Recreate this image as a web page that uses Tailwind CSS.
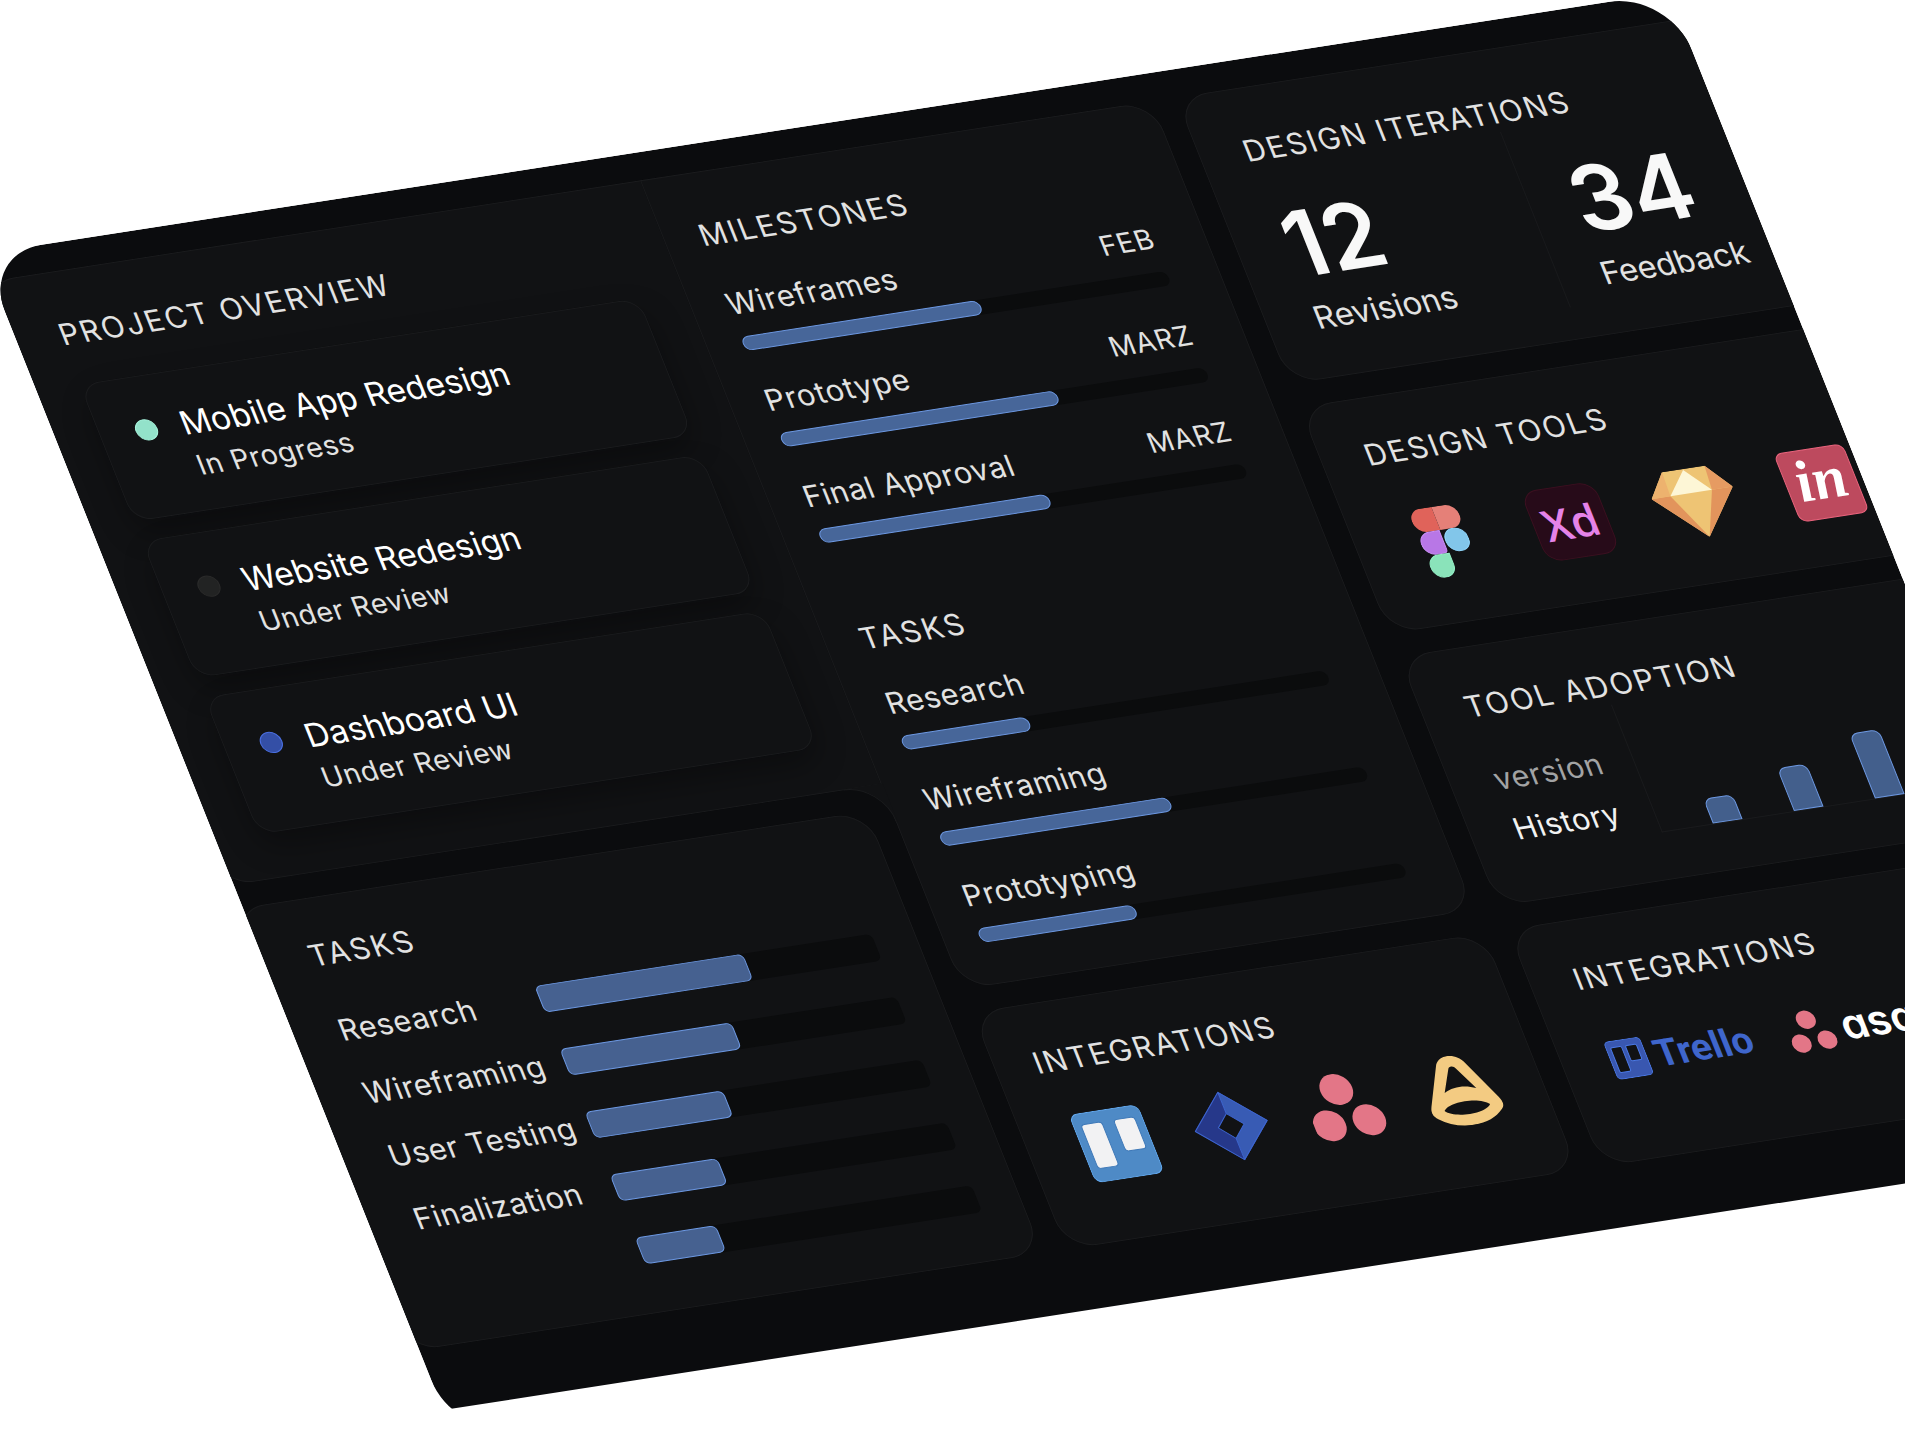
<!DOCTYPE html>
<html lang="en">
<head>
    <meta charset="UTF-8">
    <meta name="viewport" content="width=device-width, initial-scale=1.0">
    <title>Design project dashboard</title>
    <script src="https://cdn.jsdelivr.net/npm/@tailwindcss/browser@4"></script>
</head>
<body class="bg-white font-['Inter',sans-serif] text-[#e2e2e2]">
    <main class="min-h-screen overflow-hidden pt-[254px]">
        <!-- Tilted board, cut a little above its lower rounding -->
        <div class="-ml-[18px] w-[calc(100%-198px)] origin-top-left -rotate-[8.81deg] skew-x-[12.94deg] overflow-hidden">
            <div class="-mb-[29px] overflow-hidden rounded-[60px] bg-[#0b0c0e] pt-7 pb-[92px]">
                <div class="-mr-[37px] -ml-[11px] grid grid-cols-[641fr_518fr_546fr] gap-x-6">

                    <!-- Left column -->
                    <div class="flex min-w-0 flex-col gap-6">
                        <section class="relative -mr-11 rounded-l-[32px] bg-[#111214] pt-11 pr-[66px] pb-[46px] pl-[54px] ring-1 ring-[#1a1b1d] ring-inset">
                            <h2 class="text-[30px]/10 tracking-[2px]">PROJECT OVERVIEW</h2>
                            <ul class="mt-8 flex flex-col gap-5">
                                <li class="flex h-36 gap-6 rounded-[20px] bg-[#111214] pt-8 pl-9 shadow-[0_14px_30px_rgba(0,0,0,0.3)] ring-1 ring-[#1a1b1d] ring-inset">
                                    <span class="mt-3 size-[22px] rounded-full border border-[#a6f3dc] bg-[#93e2ca]"></span>
                                    <div>
                                        <h3 class="text-[33px]/[44px] text-white">Mobile App Redesign</h3>
                                        <p class="text-[28px]/[44px] tracking-wide">In Progress</p>
                                    </div>
                                </li>
                                <li class="flex h-36 gap-6 rounded-[20px] bg-[#111214] pt-8 pl-9 shadow-[0_14px_30px_rgba(0,0,0,0.3)] ring-1 ring-[#1a1b1d] ring-inset">
                                    <span class="mt-3 size-[22px] rounded-full border border-[#2a2a2a] bg-[#222323]"></span>
                                    <div>
                                        <h3 class="text-[33px]/[44px] text-white">Website Redesign</h3>
                                        <p class="text-[28px]/[44px] tracking-wide">Under Review</p>
                                    </div>
                                </li>
                                <li class="flex h-36 gap-6 rounded-[20px] bg-[#111214] pt-8 pl-9 shadow-[0_14px_30px_rgba(0,0,0,0.3)] ring-1 ring-[#1a1b1d] ring-inset">
                                    <span class="mt-3 size-[22px] rounded-full border border-[#4a6fe0] bg-[#344fa6]"></span>
                                    <div>
                                        <h3 class="text-[33px]/[44px] text-white">Dashboard UI</h3>
                                        <p class="text-[28px]/[44px] tracking-wide">Under Review</p>
                                    </div>
                                </li>
                            </ul>
                            <!-- inner corner where this card meets the next column -->
                            <svg class="absolute top-full right-[18px] z-20 -mt-px size-10" viewBox="0 0 40 40" fill="none">
                                <path d="M0 0H40V40H38.5A38 38 0 0 0 0 .5Z" fill="#111214"/>
                                <path d="M0 .5A38.5 38.5 0 0 1 38.5 40" stroke="#1a1b1d"/>
                            </svg>
                        </section>

                        <section class="flex-1 rounded-[32px] bg-[#111214] pt-[38px] pr-[42px] pb-11 pl-14 ring-1 ring-[#1a1b1d] ring-inset">
                            <h2 class="text-[30px]/10 tracking-[2px]">TASKS</h2>
                            <ul class="mt-[38px] flex flex-col gap-[26px] text-[30px]/10 tracking-wide">
                                <li class="flex h-10 items-center">
                                    <span class="w-[203px]">Research</span>
                                    <div class="h-7 flex-1 rounded-md bg-[#0b0c0d]"><div class="h-7 w-[62%] rounded-md border border-[#6c97e0] bg-[#466190]"></div></div>
                                </li>
                                <li class="flex h-10 items-center">
                                    <span class="w-[203px]">Wireframing</span>
                                    <div class="h-7 flex-1 rounded-md bg-[#0b0c0d]"><div class="h-7 w-[51%] rounded-md border border-[#6c97e0] bg-[#466190]"></div></div>
                                </li>
                                <li class="flex h-10 items-center">
                                    <span class="w-[203px]">User Testing</span>
                                    <div class="h-7 flex-1 rounded-md bg-[#0b0c0d]"><div class="h-7 w-[41%] rounded-md border border-[#6c97e0] bg-[#466190]"></div></div>
                                </li>
                                <li class="flex h-10 items-center">
                                    <span class="w-[203px]">Finalization</span>
                                    <div class="h-7 flex-1 rounded-md bg-[#0b0c0d]"><div class="h-7 w-[32%] rounded-md border border-[#6c97e0] bg-[#466190]"></div></div>
                                </li>
                                <li class="flex h-10 items-center">
                                    <span class="w-[203px]"></span>
                                    <div class="h-7 flex-1 rounded-md bg-[#0b0c0d]"><div class="h-7 w-[24%] rounded-md border border-[#6c97e0] bg-[#466190]"></div></div>
                                </li>
                            </ul>
                        </section>
                    </div>

                    <!-- Middle column -->
                    <div class="relative z-10 flex min-w-0 flex-col gap-6">
                        <section class="rounded-[32px] rounded-tl-none bg-[#111214] pt-11 pr-[51px] pb-[43px] pl-9 ring-1 ring-[#1a1b1d] ring-inset">
                            <h2 class="text-[30px]/10 tracking-[2px]">MILESTONES</h2>
                            <ul class="mt-8 flex flex-col gap-8 text-[30px]/10 tracking-wide">
                                <li>
                                    <div class="flex justify-between"><span>Wireframes</span><span class="text-[28px]/10">FEB</span></div>
                                    <div class="mt-3.5 h-[15px] rounded-full bg-[#0b0c0d]"><div class="h-[15px] w-[56%] rounded-full border border-[#6c97e0] bg-[#476699]"></div></div>
                                </li>
                                <li>
                                    <div class="flex justify-between"><span>Prototype</span><span class="text-[28px]/10">MARZ</span></div>
                                    <div class="mt-3.5 h-[15px] rounded-full bg-[#0b0c0d]"><div class="h-[15px] w-[65%] rounded-full border border-[#6c97e0] bg-[#476699]"></div></div>
                                </li>
                                <li>
                                    <div class="flex justify-between"><span>Final Approval</span><span class="text-[28px]/10">MARZ</span></div>
                                    <div class="mt-3.5 h-[15px] rounded-full bg-[#0b0c0d]"><div class="h-[15px] w-[54%] rounded-full border border-[#6c97e0] bg-[#476699]"></div></div>
                                </li>
                            </ul>
                            <h2 class="mt-20 text-[30px]/10 tracking-[2px]">TASKS</h2>
                            <ul class="mt-7 flex flex-col gap-8 text-[30px]/10 tracking-wide">
                                <li>
                                    <span class="block">Research</span>
                                    <div class="mt-3.5 h-[15px] rounded-full bg-[#0b0c0d]"><div class="h-[15px] w-[30%] rounded-full border border-[#6c97e0] bg-[#476699]"></div></div>
                                </li>
                                <li>
                                    <span class="block">Wireframing</span>
                                    <div class="mt-3.5 h-[15px] rounded-full bg-[#0b0c0d]"><div class="h-[15px] w-[54%] rounded-full border border-[#6c97e0] bg-[#476699]"></div></div>
                                </li>
                                <li>
                                    <span class="block">Prototyping</span>
                                    <div class="mt-3.5 h-[15px] rounded-full bg-[#0b0c0d]"><div class="h-[15px] w-[37%] rounded-full border border-[#6c97e0] bg-[#476699]"></div></div>
                                </li>
                            </ul>
                        </section>

                        <section class="flex-1 rounded-[32px] bg-[#111214] pt-10 pl-10 ring-1 ring-[#1a1b1d] ring-inset">
                            <h2 class="text-[30px]/10 tracking-[2px]">INTEGRATIONS</h2>
                            <div class="mt-9 -ml-2.5 grid grid-cols-[repeat(4,116px)] justify-items-center">
                                <svg class="h-[72px] w-[70px]" viewBox="0 0 70 72">
                                    <rect x=".5" y=".5" width="69" height="71" rx="8" fill="#4e8ac6" stroke="#62a8ee"/>
                                    <rect x="8" y="12" width="21" height="46" rx="3.5" fill="#f2f2f3" stroke="#3f79b8"/>
                                    <rect x="41" y="12" width="21" height="33" rx="3.5" fill="#f2f2f3" stroke="#3f79b8"/>
                                </svg>
                                <svg class="h-[72px] w-[74px]" viewBox="0 0 74 72">
                                    <path d="M37 0V23L24 36L37 49V72L0 36Z" fill="#26388a"/>
                                    <path d="M37 0L74 36L37 72V49L50 36L37 23Z" fill="#385bb4"/>
                                    <path d="M37 .7L73.3 36L37 71.3L.7 36ZM37 23L50 36L37 49L24 36ZM37 0V23M37 49V72" fill="none" stroke="#3d65cf"/>
                                </svg>
                                <svg class="h-[72px] w-[74px]" viewBox="0 0 74 72" fill="#e37687">
                                    <circle cx="35" cy="16" r="16"/>
                                    <circle cx="15" cy="51" r="16"/>
                                    <circle cx="55" cy="51" r="16"/>
                                </svg>
                                <svg class="h-[72px] w-[72px]" viewBox="0 0 72 72">
                                    <path fill="#f3cb82" fill-rule="evenodd" d="M36 0C43 0 48 4 50 8L70 48C73 54 72 58 68 61C60 68 49 72 36 72C23 72 12 68 4 61C0 58 -1 54 2 48L22 8C24 4 29 0 36 0ZM36 11C34 11 33 12 32 14L20 36C30 31 42 31 52 36L40 14C39 12 38 11 36 11ZM13 54C20 45 52 45 59 54C52 63 20 63 13 54Z"/>
                                </svg>
                            </div>
                        </section>
                    </div>

                    <!-- Right column -->
                    <div class="flex min-w-0 flex-col gap-6">
                        <section class="rounded-[32px] bg-[#111214] pt-11 pb-[33px] pl-11 ring-1 ring-[#1a1b1d] ring-inset">
                            <h2 class="text-[30px]/10 tracking-[2px]">DESIGN ITERATIONS</h2>
                            <div class="grid grid-cols-2">
                                <div class="pt-9 pb-2 pl-1">
                                    <p class="text-[92px]/[88px] font-semibold text-[#f8f8f8]">12</p>
                                    <p class="mt-3 text-[32px]/10">Revisions</p>
                                </div>
                                <div class="border-l border-[#191a1c] pt-9 pl-[42px]">
                                    <p class="text-[92px]/[88px] font-semibold text-[#f8f8f8]">34</p>
                                    <p class="mt-3 text-[32px]/10">Feedback</p>
                                </div>
                            </div>
                        </section>

                        <section class="rounded-[32px] bg-[#111214] pt-[38px] pb-[46px] pl-11 ring-1 ring-[#1a1b1d] ring-inset">
                            <h2 class="text-[30px]/10 tracking-[2px]">DESIGN TOOLS</h2>
                            <div class="mt-10 -ml-5 grid grid-cols-[repeat(4,127px)] items-center justify-items-center">
                                <svg class="h-[72px] w-12" viewBox="0 0 48 72">
                                    <path d="M24 0H12A12 12 0 0 0 12 24H24Z" fill="#e0635a"/>
                                    <path d="M24 0H36A12 12 0 0 1 36 24H24Z" fill="#e58078"/>
                                    <path d="M22.500 24.500H12A11.500 11.500 0 0 0 12 47.500H19Q22.500 47.500 22.500 44Z" fill="#b877e6" stroke="#c98df5"/>
                                    <rect x="25" y="24.500" width="22.500" height="23" rx="10.500" fill="#82c6ea" stroke="#8fd4fa"/>
                                    <path d="M23.500 48.500H12A11.500 11.500 0 1 0 23.500 60Z" fill="#8ae3ba" stroke="#93f0c6"/>
                                </svg>
                                <div class="flex h-[74px] w-[74px] items-center justify-center rounded-2xl border border-[#3b1020] bg-[#270b19] font-['Open_Sans',sans-serif] text-[44px] font-semibold text-[#e583e8]">Xd</div>
                                <svg class="h-[71px] w-[82px]" viewBox="0 0 82 71">
                                    <path d="M20 0H63L82 25L41 71L0 25Z" fill="#eec474"/>
                                    <path d="M0 25H19L41 71Z" fill="#e2945c"/>
                                    <path d="M82 25H61L41 71Z" fill="#e2945c"/>
                                    <path d="M20 0L0 25H19Z" fill="#edb26e"/>
                                    <path d="M63 0L82 25H61Z" fill="#e69b62"/>
                                    <path d="M41 1L19 25H61Z" fill="#fdf6d6"/>
                                </svg>
                                <div class="flex h-[72px] w-[70px] items-center justify-center rounded-lg border border-[#e8637c] bg-[#bd4a5e] pb-2 font-['Liberation_Serif',serif] text-[60px]/[60px] font-bold text-white italic">in</div>
                            </div>
                        </section>

                        <section class="rounded-[32px] bg-[#111214] pt-10 pb-12 pl-11 ring-1 ring-[#1a1b1d] ring-inset">
                            <h2 class="text-[30px]/10 tracking-[2px]">TOOL ADOPTION</h2>
                            <div class="flex">
                                <div class="flex w-[140px] flex-col gap-3 pt-9 text-[30px]/10 tracking-wide">
                                    <span class="text-[#a2a3a4]">version</span>
                                    <span class="text-[#f2f2f2]">History</span>
                                </div>
                                <div class="flex h-[134px] flex-1 items-end gap-[52px] border-b border-l border-[#1a1b1d] pl-[51px]">
                                    <div class="h-[26px] w-[30px] rounded-t-lg border border-[#6c97e0] bg-[#435f8c]"></div>
                                    <div class="h-[45px] w-[30px] rounded-t-lg border border-[#6c97e0] bg-[#435f8c]"></div>
                                    <div class="h-[68px] w-[30px] rounded-t-lg border border-[#6c97e0] bg-[#435f8c]"></div>
                                </div>
                            </div>
                        </section>

                        <section class="flex-1 rounded-[32px] bg-[#111214] pt-10 pl-11 ring-1 ring-[#1a1b1d] ring-inset">
                            <h2 class="text-[30px]/10 tracking-[2px]">INTEGRATIONS</h2>
                            <div class="mt-11 flex gap-9 pl-1">
                                <div class="flex items-center gap-2">
                                    <svg class="h-10 w-[37px]" viewBox="0 0 37 40">
                                        <rect x=".5" y=".5" width="36" height="39" rx="4.500" fill="#3957b0" stroke="#4a78e4"/>
                                        <rect x="5" y="7" width="11" height="26" rx="1.500" fill="#111214" stroke="#4a78e4"/>
                                        <rect x="20" y="7" width="11" height="16" rx="1.500" fill="#111214" stroke="#4a78e4"/>
                                    </svg>
                                    <span class="font-['Roboto',sans-serif] text-[38px]/[44px] font-bold text-[#3f66cc]">Trello</span>
                                </div>
                                <div class="flex items-center gap-2">
                                    <svg class="h-[43px] w-[46px]" viewBox="0 0 46 43" fill="#e37687">
                                        <circle cx="23" cy="10" r="9.500"/>
                                        <circle cx="10" cy="33" r="9.500"/>
                                        <circle cx="36" cy="33" r="9.500"/>
                                    </svg>
                                    <span class="text-[42px]/[44px] font-semibold text-white [font-feature-settings:'cv11']">asana</span>
                                </div>
                            </div>
                        </section>
                    </div>
                </div>
            </div>
        </div>
    </main>
</body>
</html>
